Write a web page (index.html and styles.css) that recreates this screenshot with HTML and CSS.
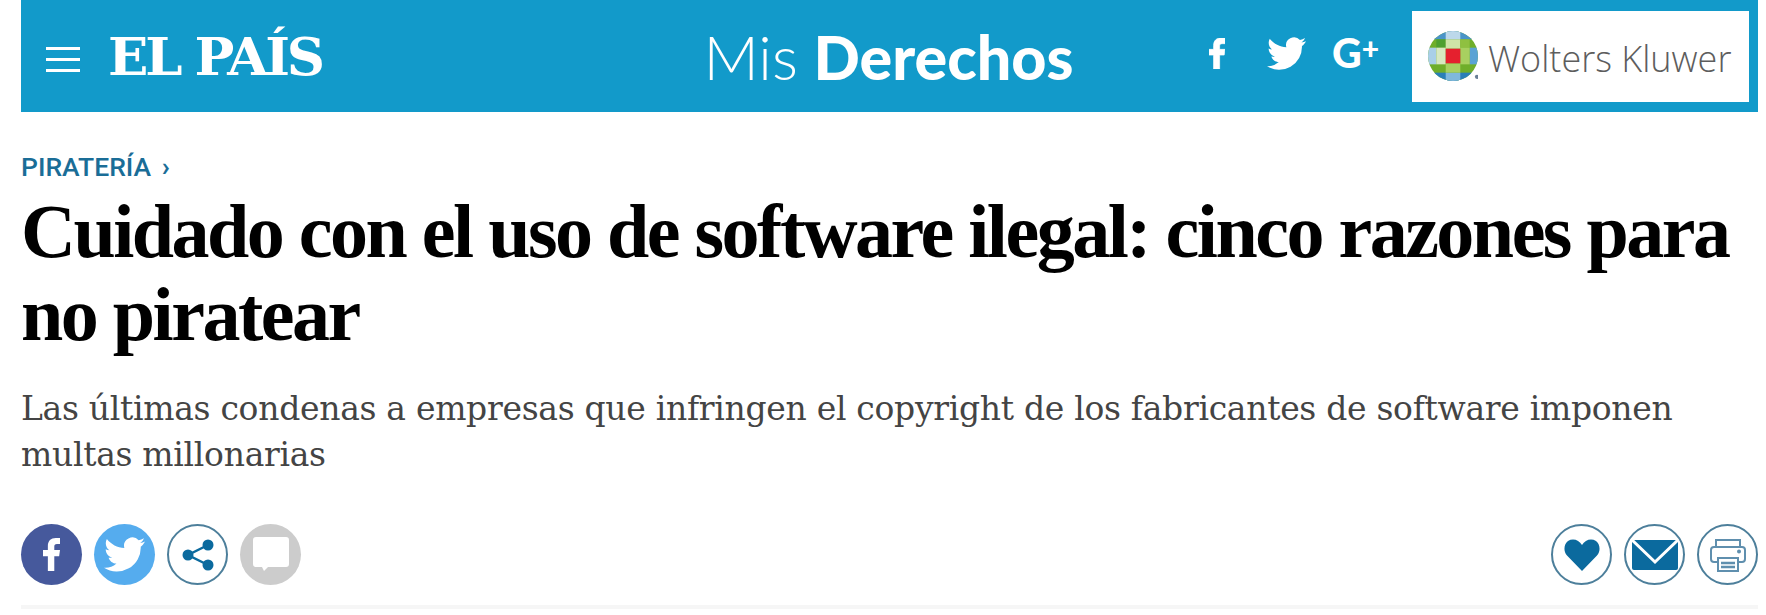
FILE: index.html
```html
<!DOCTYPE html>
<html lang="es">
<head>
    <meta charset="utf-8">
    <title>Cuidado con el uso de software ilegal</title>
    <link rel="stylesheet" href="styles.css">
</head>
<body>
<div class="page">
    <header class="bar">
        <div class="bar-left">
            <div class="burger"><span></span><span></span><span></span></div>
            <div class="brand">EL PAÍS</div>
        </div>
        <div class="section-name"><span class="mis">Mis</span> <strong>Derechos</strong></div>
        <div class="bar-right">
            <svg class="ico-f" viewBox="0 0 14 30" width="16" height="31" preserveAspectRatio="none"><path fill="#fff" stroke="#fff" stroke-width=".6" d="M4 30V16.500H0V11H4V7.500C4 2.500 6.500 0 10.500 0H14V5.500H11.500C9.800 5.500 9.300 6.300 9.300 7.800V11H14L13.300 16.500H9.300V30Z"/></svg>
            <svg class="ico-t" viewBox="0 0 24 20" width="39" height="33"><path fill="#fff" d="M24 2.400c-.9.400-1.800.7-2.800.8 1-.6 1.800-1.600 2.200-2.700-1 .6-2 1-3.100 1.200A4.900 4.900 0 0 0 11.900 6.200C7.800 6 4.100 4 1.700.9.400 3.200 1.100 6.100 3.200 7.500c-.8 0-1.500-.2-2.200-.6 0 2.400 1.700 4.400 3.900 4.900-.7.200-1.500.2-2.200.1.600 2 2.400 3.400 4.600 3.400A9.900 9.900 0 0 1 0 17.800 14 14 0 0 0 21.500 5.400c1-.7 1.800-1.700 2.500-3z"/></svg>
            <div class="ico-g">G<sup>+</sup></div>
            <div class="wk">
                <svg viewBox="0 0 48 48" width="50" height="50">
                    <defs><clipPath id="globe"><circle cx="24" cy="24" r="24"/></clipPath></defs>
                    <g clip-path="url(#globe)">
                        <rect width="48" height="48" fill="#6fae2a"/>
                        <rect width="48" height="8" fill="#4a94c8"/>
                        <rect x="17" width="14" height="8" fill="#bcd8ea"/>
                        <rect y="40" width="48" height="8" fill="#2a7fb8"/>
                        <rect x="17" y="40" width="14" height="8" fill="#7fb8dc"/>
                        <rect y="16" width="8" height="16" fill="#a9cfe8"/>
                        <rect x="40" y="16" width="8" height="16" fill="#5aa3d4"/>
                        <rect x="8" y="8" width="9" height="8" fill="#4fa030"/>
                        <rect x="17" y="8" width="14" height="9" fill="#cfe5a8"/>
                        <rect x="31" y="8" width="9" height="8" fill="#8fc040"/>
                        <rect x="8" y="16" width="9" height="16" fill="#d8e8c0"/>
                        <rect x="31" y="16" width="9" height="16" fill="#a8d060"/>
                        <rect x="17" y="31" width="14" height="9" fill="#a8d060"/>
                        <rect x="17" y="17" width="14" height="14" fill="#e5202e"/>
                    </g>
                    <circle cx="47" cy="44" r="2" fill="#6a7f96"/>
                </svg>
                <span>Wolters Kluwer</span>
            </div>
        </div>
    </header>

    <div class="kicker">PIRATERÍA <span class="arrow">›</span></div>
    <h1>Cuidado con el uso de software ilegal: cinco razones para no piratear</h1>
    <h2>Las últimas condenas a empresas que infringen el copyright de los fabricantes de software imponen multas millonarias</h2>

    <div class="tools">
        <div class="tools-group">
            <div class="round fb">
                <svg viewBox="0 0 14 30" width="17" height="33" preserveAspectRatio="none"><path fill="#fff" d="M4 30V16.500H0V11H4V7.500C4 2.500 6.500 0 10.500 0H14V5.500H11.500C9.800 5.500 9.300 6.300 9.300 7.800V11H14L13.300 16.500H9.300V30Z"/></svg>
            </div>
            <div class="round tw">
                <svg viewBox="0 0 24 20" width="41" height="35"><path fill="#fff" d="M24 2.400c-.9.400-1.800.7-2.800.8 1-.6 1.800-1.600 2.200-2.700-1 .6-2 1-3.100 1.200A4.900 4.900 0 0 0 11.900 6.200C7.800 6 4.100 4 1.700.9.400 3.200 1.100 6.100 3.200 7.500c-.8 0-1.500-.2-2.200-.6 0 2.400 1.700 4.400 3.900 4.900-.7.200-1.500.2-2.200.1.600 2 2.400 3.400 4.600 3.400A9.900 9.900 0 0 1 0 17.800 14 14 0 0 0 21.500 5.400c1-.7 1.800-1.700 2.500-3z"/></svg>
            </div>
            <div class="round line">
                <svg viewBox="0 0 32 32" width="32" height="32">
                    <path d="M26 6L6 16L26 26" fill="none" stroke="#0b6a9e" stroke-width="2.500"/>
                    <circle cx="26" cy="6" r="5.500" fill="#0b6a9e"/>
                    <circle cx="6" cy="16" r="5.500" fill="#0b6a9e"/>
                    <circle cx="26" cy="26" r="5.500" fill="#0b6a9e"/>
                </svg>
            </div>
            <div class="round comment">
                <svg viewBox="0 0 36 36" width="36" height="36"><path fill="#fff" d="M3 0H33a3 3 0 0 1 3 3V27a3 3 0 0 1-3 3H15L11 34L9 30H3a3 3 0 0 1-3-3V3A3 3 0 0 1 3 0Z"/></svg>
            </div>
        </div>
        <div class="tools-group">
            <div class="round line">
                <svg viewBox="0 0 36 32" width="36" height="32"><path fill="#0b6a9e" d="M18 32L3 16.500C-1 12 0 5 4 2C9-1 15 1 18 6C21 1 27-1 32 2C36 5 37 12 33 16.500Z"/></svg>
            </div>
            <div class="round line">
                <svg viewBox="0 0 46 30" width="46" height="30">
                    <rect width="46" height="30" rx="2" fill="#0b6a9e"/>
                    <path d="M0 0L23 22L46 0" fill="none" stroke="#fff" stroke-width="3"/>
                </svg>
            </div>
            <div class="round line">
                <svg viewBox="0 0 36 34" width="36" height="34" fill="none" stroke="#5f8fae" stroke-width="2">
                    <path d="M6 9V2H30V9"/>
                    <path d="M7 24H4a3 3 0 0 1-3-3V12a3 3 0 0 1 3-3H32a3 3 0 0 1 3 3V21a3 3 0 0 1-3 3H29"/>
                    <rect x="8" y="20" width="20" height="13"/>
                    <path d="M11 25H25M11 29H25" stroke-width="2.500"/>
                    <circle cx="29" cy="13.500" r="1" fill="#5f8fae"/>
                </svg>
            </div>
        </div>
    </div>
    <div class="rule"></div>
</div>
</body>
</html>
```

FILE: styles.css
```css
body { margin: 0; background: #fff; color: #000; }
.page { margin-left: 21px; width: 1737px; }

.bar { height: 112px; background: #129aca; display: flex; align-items: center; justify-content: space-between; color: #fff; }
.bar-left { display: flex; align-items: center; width: 547px; }
.burger { margin-left: 25px; width: 34px; display: flex; flex-direction: column; gap: 8px; padding-top: 6px; }
.burger span { display: block; height: 3px; background: #fff; }
.brand { margin-left: 28px; font: bold 53px "DejaVu Serif", serif; letter-spacing: -3.2px; white-space: nowrap; }

.section-name { font: 61px Lato, sans-serif; white-space: nowrap; }
.section-name .mis { font-weight: 300; }
.section-name strong { font-weight: 900; }

.bar-right { display: flex; align-items: center; height: 92px; }
.ico-f { margin: 0 42px 6px 0; }
.ico-t { margin: 0 26px 6px 0; }
.ico-g { font: 900 41px Lato, sans-serif; margin: 0 28px 8px 0; width: 52px; white-space: nowrap; }
.ico-g sup { font-size: 30px; line-height: 0; vertical-align: 8px; }
.wk { width: 337px; height: 91px; margin-right: 9px; background: #fff; display: flex; align-items: center; padding-left: 16px; box-sizing: border-box; }
.wk span { font: 300 36px "Open Sans", sans-serif; color: #5d5d5d; margin-left: 10px; padding-top: 4px; white-space: nowrap; }

.kicker { margin-top: 40px; font: 500 26.5px/30px Roboto, sans-serif; color: #1a6d97; }
.kicker .arrow { margin-left: 4px; font-weight: 700; }

h1 { margin: 8px 0 0; font: bold 76px/83px "Liberation Serif", serif; letter-spacing: -2.5px; }
h2 { margin: 30px 0 0; font: normal 33px/46px "DejaVu Serif", serif; color: #444; width: 1700px; letter-spacing: -0.3px; }

.tools { margin-top: 46px; display: flex; justify-content: space-between; }
.tools-group { display: flex; gap: 12px; }
.round { width: 61px; height: 61px; box-sizing: border-box; border-radius: 50%; display: flex; align-items: center; justify-content: center; }
.round.fb { background: #46599c; }
.round.tw { background: #55acee; }
.round.comment { background: #ccc; }
.round.line { border: 2.5px solid #4d7f9b; background: #fff; }

.rule { margin-top: 20px; height: 4px; background: #f6f6f6; }
```
